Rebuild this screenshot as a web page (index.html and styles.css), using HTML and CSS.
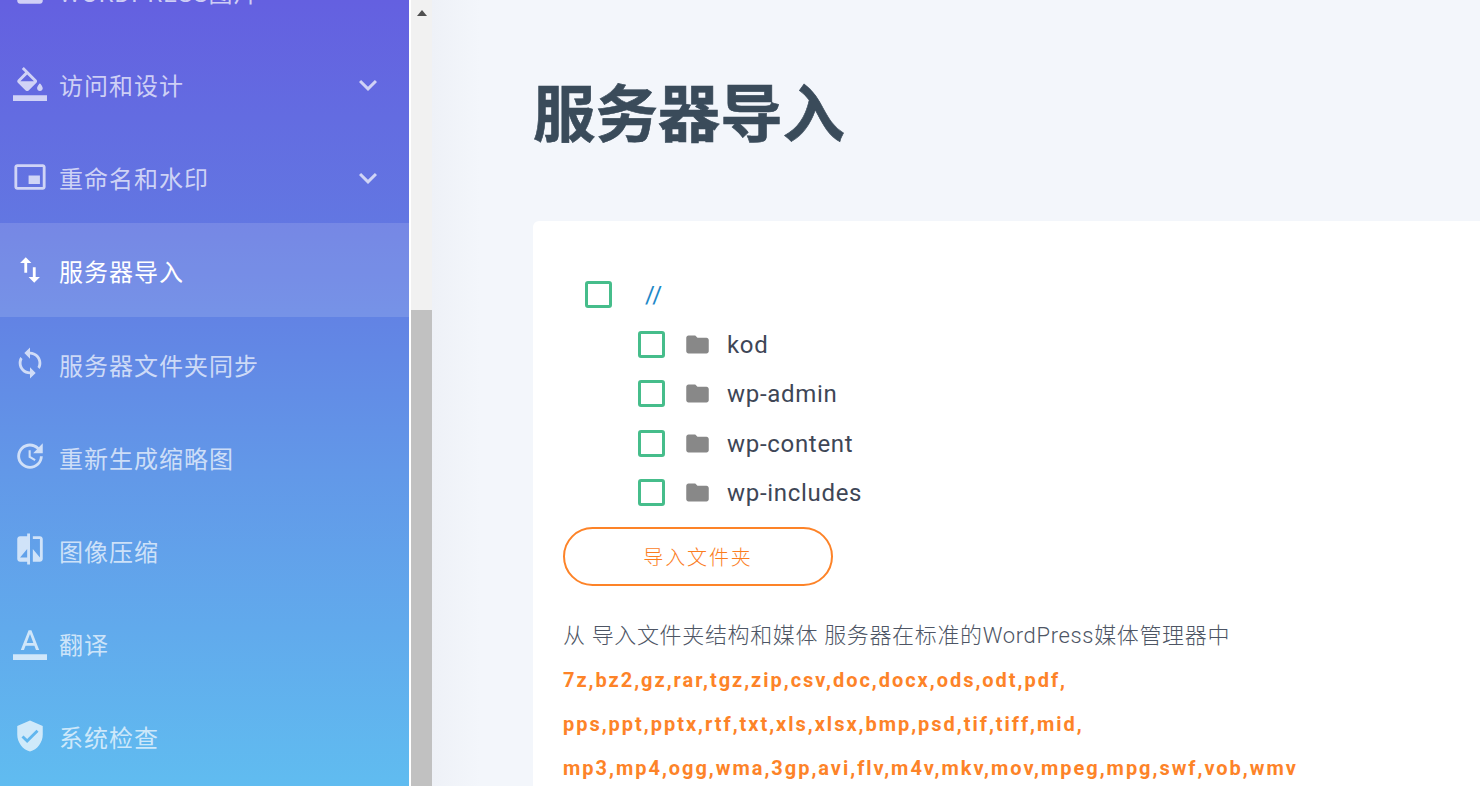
FILE: index.html
```html
<!DOCTYPE html>
<html lang="zh">
<head>
<meta charset="utf-8">
<title>服务器导入</title>
<link rel="stylesheet" href="styles.css">
</head>
<body>
<div class="app">
  <aside class="sidebar">
    <nav class="nav">
      <a class="item"><svg class="ico" viewBox="0 0 24 24"><path fill="currentColor" d="M21 19V5c0-1.100-.9-2-2-2H5c-1.100 0-2 .9-2 2v14c0 1.100.9 2 2 2h14c1.100 0 2-.9 2-2z"/></svg><span class="label">WORDPRESS图片</span></a>
      <a class="item"><svg class="ico" viewBox="0 0 24 24"><path fill="currentColor" d="M16.560 8.940L7.620 0 6.210 1.410l2.380 2.380-5.150 5.150c-.59.59-.59 1.540 0 2.120l5.500 5.500c.29.29.68.44 1.060.44s.77-.15 1.060-.44l5.500-5.500c.59-.58.59-1.530 0-2.120zM5.210 10L10 5.210 14.790 10H5.210zM19 11.500s-2 2.170-2 3.500c0 1.100.9 2 2 2s2-.9 2-2c0-1.330-2-3.500-2-3.500zM0 20h24v4H0z"/></svg><span class="label">访问和设计</span><svg class="chev" viewBox="0 0 24 24"><path fill="currentColor" d="M16.590 8.590L12 13.170 7.410 8.590 6 10l6 6 6-6z"/></svg></a>
      <a class="item"><svg class="ico" viewBox="0 0 24 24"><path fill="currentColor" d="M19 11h-8v6h8v-6zm4 8V4.980C23 3.880 22.100 3 21 3H3c-1.100 0-2 .88-2 1.980V19c0 1.100.9 2 2 2h18c1.100 0 2-.9 2-2zm-2 .020H3V4.970h18v14.050z"/></svg><span class="label">重命名和水印</span><svg class="chev" viewBox="0 0 24 24"><path fill="currentColor" d="M16.590 8.590L12 13.170 7.410 8.590 6 10l6 6 6-6z"/></svg></a>
      <a class="item active"><svg class="ico" viewBox="0 0 24 24"><path fill="currentColor" d="M9 3L5 6.990h3V14h2V6.990h3L9 3zm7 14.010V10h-2v7.010h-3L15 21l4-3.990h-3z"/></svg><span class="label">服务器导入</span></a>
      <a class="item"><svg class="ico" viewBox="0 0 24 24"><path fill="currentColor" d="M12 4V1L8 5l4 4V6c3.310 0 6 2.690 6 6 0 1.010-.25 1.970-.7 2.800l1.460 1.460C19.540 15.030 20 13.570 20 12c0-4.420-3.580-8-8-8zm0 14c-3.310 0-6-2.690-6-6 0-1.010.25-1.970.7-2.800L5.240 7.740C4.460 8.970 4 10.430 4 12c0 4.420 3.580 8 8 8v3l4-4-4-4v3z"/></svg><span class="label">服务器文件夹同步</span></a>
      <a class="item"><svg class="ico" viewBox="0 0 24 24"><path fill="currentColor" d="M21 10.120h-6.780l2.740-2.820c-2.730-2.700-7.150-2.800-9.880-.1-2.730 2.710-2.730 7.080 0 9.790s7.150 2.710 9.880 0C18.320 15.650 19 14.080 19 12.100h2c0 1.980-.88 4.550-2.640 6.290-3.510 3.480-9.210 3.480-12.720 0-3.500-3.470-3.530-9.110-.02-12.580s9.140-3.470 12.650 0L21 3v7.120zM12.500 8v4.250l3.500 2.080-.72 1.210L11 13V8h1.500z"/></svg><span class="label">重新生成缩略图</span></a>
      <a class="item"><svg class="ico" viewBox="0 0 24 24"><path fill="currentColor" d="M10 3H5c-1.100 0-2 .9-2 2v14c0 1.100.9 2 2 2h5v2h2V1h-2v2zm0 15H5l5-6v6zm9-15h-5v2h5v13l-5-6v9h5c1.100 0 2-.9 2-2V5c0-1.100-.9-2-2-2z"/></svg><span class="label">图像压缩</span></a>
      <a class="item"><svg class="ico" viewBox="0 0 24 24"><path fill="currentColor" d="M0 20h24v4H0zM11 3L5.500 17h2.250l1.120-3h6.250l1.120 3h2.250L13 3h-2zm-1.380 9L12 5.670 14.380 12H9.620z"/></svg><span class="label">翻译</span></a>
      <a class="item"><svg class="ico" viewBox="0 0 24 24"><path fill="currentColor" d="M12 1L3 5v6c0 5.550 3.840 10.740 9 12 5.160-1.260 9-6.450 9-12V5l-9-4zm-2 16l-4-4 1.410-1.410L10 14.170l6.590-6.590L18 9l-8 8z"/></svg><span class="label">系统检查</span></a>
    </nav>
  </aside>
  <div class="scrollbar"><span class="arrow"></span><span class="thumb"></span></div>
  <main class="main">
    <h1 class="title">服务器导入</h1>
    <section class="card">
      <div class="root"><span class="check"></span><span class="root-name">//</span></div>
      <ul class="tree">
        <li class="row"><span class="check"></span><svg class="folder" viewBox="0 0 24 24"><path fill="currentColor" d="M10 4H4c-1.100 0-1.990.9-1.990 2L2 18c0 1.100.9 2 2 2h16c1.100 0 2-.9 2-2V8c0-1.100-.9-2-2-2h-8l-2-2z"/></svg><span class="name">kod</span></li>
        <li class="row"><span class="check"></span><svg class="folder" viewBox="0 0 24 24"><path fill="currentColor" d="M10 4H4c-1.100 0-1.990.9-1.990 2L2 18c0 1.100.9 2 2 2h16c1.100 0 2-.9 2-2V8c0-1.100-.9-2-2-2h-8l-2-2z"/></svg><span class="name">wp-admin</span></li>
        <li class="row"><span class="check"></span><svg class="folder" viewBox="0 0 24 24"><path fill="currentColor" d="M10 4H4c-1.100 0-1.990.9-1.990 2L2 18c0 1.100.9 2 2 2h16c1.100 0 2-.9 2-2V8c0-1.100-.9-2-2-2h-8l-2-2z"/></svg><span class="name">wp-content</span></li>
        <li class="row"><span class="check"></span><svg class="folder" viewBox="0 0 24 24"><path fill="currentColor" d="M10 4H4c-1.100 0-1.990.9-1.990 2L2 18c0 1.100.9 2 2 2h16c1.100 0 2-.9 2-2V8c0-1.100-.9-2-2-2h-8l-2-2z"/></svg><span class="name">wp-includes</span></li>
      </ul>
      <button class="btn">导入文件夹</button>
      <p class="desc">从 导入文件夹结构和媒体 服务器在标准的WordPress媒体管理器中</p>
      <p class="types">7z,bz2,gz,rar,tgz,zip,csv,doc,docx,ods,odt,pdf,</p>
      <p class="types">pps,ppt,pptx,rtf,txt,xls,xlsx,bmp,psd,tif,tiff,mid,</p>
      <p class="types">mp3,mp4,ogg,wma,3gp,avi,flv,m4v,mkv,mov,mpeg,mpg,swf,vob,wmv</p>
    </section>
  </main>
</div>
</body>
</html>
```
FILE: styles.css
```css
* { box-sizing: border-box; }
html, body { margin: 0; height: 100%; overflow: hidden; }
body { font-family: Roboto, "Noto Sans CJK SC", sans-serif; background: #f3f6fb; }
.app { display: flex; height: 786px; overflow: hidden; }
.sidebar { width: 409px; flex: none; overflow: hidden; background: linear-gradient(180deg, #6460e0 0%, #6278e2 30%, #6298e8 60%, #60bcf0 100%); }
.nav { display: flex; flex-direction: column; margin-top: -56px; }
.item { height: 93.150px; flex: none; display: flex; align-items: center; padding: 0 23px 0 13px; color: rgba(255,255,255,.7); }
.item.active { background: rgba(255,255,255,.13); color: #fff; }
.ico { width: 34px; height: 34px; flex: none; margin-right: 12px; }
.label { font-size: 24px; letter-spacing: 1px; padding-top: 2px; flex: 1; white-space: nowrap; }
.chev { width: 36px; height: 36px; flex: none; margin-top: 3px; }
.scrollbar { width: 23px; flex: none; background: #f1f1f1; border-left: 2px solid #fff; display: flex; flex-direction: column; align-items: center; }
.arrow { margin-top: 10px; width: 0; height: 0; border: 5.500px solid transparent; border-top: 0; border-bottom: 6px solid #505050; }
.thumb { margin-top: 294px; width: 21px; flex: 1; background: #c1c1c1; }
.main { flex: 1; min-width: 0; padding: 0 0 0 101px; overflow: hidden; background: linear-gradient(90deg, #eef1f7, #f3f6fb 48px); }
.title { margin: 78px 0 0; height: 143px; font-size: 62.400px; line-height: 76px; font-weight: 700; -webkit-text-stroke: .6px #3a4b5a; color: #3a4b5a; }
.card { background: #fff; border-radius: 6px 0 0 0; height: 600px; padding: 60px 30px 0; }
.root { display: flex; align-items: center; height: 27px; padding-left: 22px; }
.root-name { margin-left: 33px; font-size: 24px; color: #1e88c8; }
.check { width: 27px; height: 27px; border: 3px solid #46bd8b; border-radius: 3px; flex: none; background: #fff; }
.tree { list-style: none; margin: 0; padding: 0 0 0 75px; }
.row { display: flex; align-items: center; height: 27px; margin-top: 22.500px; font-size: 24px; letter-spacing: .7px; color: #3e4656; }
.name { padding-top: 1px; }
.folder { width: 27px; height: 27px; color: #888; margin: 0 16px 0 19px; flex: none; }
.btn { display: block; margin-top: 21px; width: 270px; height: 59px; border: 2px solid #fd8328; border-radius: 30px; background: #fff; color: #fb7d1e; font: 300 20px Roboto, "Noto Sans CJK SC", sans-serif; letter-spacing: 1.900px; }
.desc { margin: 38px 0 0; height: 24px; font-size: 22px; line-height: 24px; font-weight: 300; letter-spacing: .65px; color: #4d5564; }
.types { margin: 20px 0 0; height: 24px; font-size: 20px; line-height: 24px; font-weight: 700; letter-spacing: 1.980px; color: #fd8328; }
```
